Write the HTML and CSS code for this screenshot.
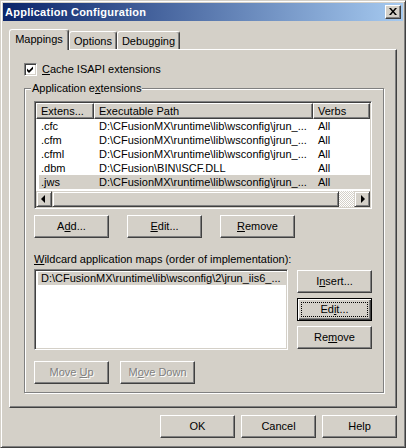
FILE: index.html
```html
<!DOCTYPE html>
<html lang="en">
<head>
    <meta charset="UTF-8">
    <title>Application Configuration</title>
    <link rel="stylesheet" href="styles.css">
</head>
<body>
    <div class="window">
        <div class="titlebar">
            <span class="title">Application Configuration</span>
            <button class="close-btn" title="Close">
                <svg width="16" height="14" viewBox="0 0 16 14"><path d="M4 3h2l2 2.5 2-2.5h2l-3 3.5 3 3.5h-2l-2-2.5-2 2.5H4l3-3.5z" fill="#000"/></svg>
            </button>
        </div>

        <div class="dialog">
            <div class="tabs">
                <div class="tab tab-mappings active">Mappings</div>
                <div class="tab tab-options">Options</div>
                <div class="tab tab-debugging">Debugging</div>
            </div>

            <div class="tab-panel">
                <label class="checkbox-row">
                    <span class="checkbox">
                        <svg width="9" height="9" viewBox="0 0 9 9"><path d="M1 3.5l2 2 4-4v2.5l-4 4-2-2z" fill="#000"/></svg>
                    </span>
                    <span><u>C</u>ache ISAPI extensions</span>
                </label>

                <div class="group">
                    <span class="group-label">Application e<u>x</u>tensions</span>

                    <div class="listview">
                        <div class="lv-header">
                            <div class="lv-head col-ext">Extens...</div>
                            <div class="lv-head col-path">Executable Path</div>
                            <div class="lv-head col-verbs">Verbs</div>
                        </div>
                        <div class="lv-rows">
                            <div class="lv-row">
                                <span class="lv-cell col-ext">.cfc</span>
                                <span class="lv-cell col-path">D:\CFusionMX\runtime\lib\wsconfig\jrun_...</span>
                                <span class="lv-cell col-verbs">All</span>
                            </div>
                            <div class="lv-row">
                                <span class="lv-cell col-ext">.cfm</span>
                                <span class="lv-cell col-path">D:\CFusionMX\runtime\lib\wsconfig\jrun_...</span>
                                <span class="lv-cell col-verbs">All</span>
                            </div>
                            <div class="lv-row">
                                <span class="lv-cell col-ext">.cfml</span>
                                <span class="lv-cell col-path">D:\CFusionMX\runtime\lib\wsconfig\jrun_...</span>
                                <span class="lv-cell col-verbs">All</span>
                            </div>
                            <div class="lv-row">
                                <span class="lv-cell col-ext">.dbm</span>
                                <span class="lv-cell col-path">D:\CFusion\BIN\ISCF.DLL</span>
                                <span class="lv-cell col-verbs">All</span>
                            </div>
                            <div class="lv-row selected">
                                <span class="lv-cell col-ext">.jws</span>
                                <span class="lv-cell col-path">D:\CFusionMX\runtime\lib\wsconfig\jrun_...</span>
                                <span class="lv-cell col-verbs">All</span>
                            </div>
                        </div>
                        <div class="hscroll">
                            <div class="sb-btn">
                                <svg width="14" height="14" viewBox="0 0 14 14"><path d="M4 7l4-4v8z" fill="#000"/></svg>
                            </div>
                            <div class="sb-thumb"></div>
                            <div class="sb-track"></div>
                            <div class="sb-btn">
                                <svg width="14" height="14" viewBox="0 0 14 14"><path d="M6 3l4 4-4 4z" fill="#000"/></svg>
                            </div>
                        </div>
                    </div>

                    <div class="btn-row">
                        <button class="btn">A<u>d</u>d...</button>
                        <button class="btn"><u>E</u>dit...</button>
                        <button class="btn"><u>R</u>emove</button>
                    </div>

                    <div class="wild-label"><u>W</u>ildcard application maps (order of implementation):</div>

                    <div class="wild-area">
                        <div class="listbox">
                            <div class="lb-item selected">D:\CFusionMX\runtime\lib\wsconfig\2\jrun_iis6_...</div>
                        </div>
                        <div class="side-btns">
                            <button class="btn">I<u>n</u>sert...</button>
                            <button class="btn default"><span class="focus">Ed<u>i</u>t...</span></button>
                            <button class="btn">Re<u>m</u>ove</button>
                        </div>
                    </div>

                    <div class="btn-row move-row">
                        <button class="btn" disabled>Move <u>U</u>p</button>
                        <button class="btn" disabled>M<u>o</u>ve Down</button>
                    </div>
                </div>
            </div>

            <div class="footer">
                <button class="btn">OK</button>
                <button class="btn">Cancel</button>
                <button class="btn">Help</button>
            </div>
        </div>
    </div>
</body>
</html>
```

FILE: styles.css
```css
:root {
    --face: #d4d0c8;
    --shadow: #808080;
    --dark: #404040;
    --light: #ffffff;
}

* {
    box-sizing: border-box;
}

body {
    margin: 0;
    background: var(--face);
    font: 11px/13px "Liberation Sans", Arial, sans-serif;
    color: #000;
}

u {
    text-underline-offset: 1px;
}

.window {
    width: 406px;
    height: 448px;
    padding: 2px;
    background: var(--face);
    border: 1px solid;
    border-color: var(--face) var(--dark) var(--dark) var(--face);
    box-shadow: inset 1px 1px var(--light), inset -1px -1px var(--shadow);
}

/* title bar */
.titlebar {
    height: 18px;
    display: flex;
    align-items: center;
    justify-content: space-between;
    padding-left: 2px;
    padding-right: 2px;
    background: linear-gradient(to right, #0a246a, #a6caf0);
}

.title {
    color: #fff;
    font-weight: bold;
    line-height: 18px;
    letter-spacing: 0.25px;
}

.close-btn {
    width: 16px;
    height: 14px;
    padding: 0;
    display: block;
    background: var(--face);
    border: 1px solid;
    border-color: var(--light) var(--dark) var(--dark) var(--light);
    box-shadow: inset -1px -1px var(--shadow);
}

.close-btn svg {
    display: block;
    margin: -1px 0 0 -1px;
}

.dialog {
    padding: 8px 6px 0;
}

/* tabs */
.tabs {
    display: flex;
    align-items: flex-end;
    height: 20px;
}

.tab {
    height: 18px;
    padding-top: 3px;
    text-align: center;
    background: var(--face);
    border: 1px solid;
    border-bottom: 0;
    border-color: var(--light) var(--dark) transparent var(--light);
    border-radius: 3px 3px 0 0;
    box-shadow: inset -1px 0 var(--shadow);
}

.tab.active {
    position: relative;
    height: 21px;
    margin-bottom: -1px;
}

.tab-mappings { width: 60px; }
.tab-options { width: 48px; }
.tab-debugging { width: 63px; }

.tab-panel {
    padding: 13px 12px 14px 14px;
    border: 1px solid;
    border-color: var(--light) var(--dark) var(--dark) var(--light);
    box-shadow: inset -1px -1px var(--shadow);
}

/* checkbox */
.checkbox-row {
    display: flex;
    align-items: flex-start;
    gap: 5px;
    height: 13px;
}

.checkbox {
    width: 13px;
    height: 13px;
    padding: 1px;
    background: #fff;
    border: 1px solid;
    border-color: var(--shadow) var(--light) var(--light) var(--shadow);
    box-shadow: inset 1px 1px var(--dark), inset -1px -1px var(--face);
}

.checkbox svg {
    display: block;
}

/* group box */
.group {
    position: relative;
    margin-top: 12px;
    width: 360px;
    padding: 12px 11px 8px 9px;
    border: 1px solid var(--shadow);
    box-shadow: 1px 1px 0 var(--light), inset 1px 1px 0 var(--light);
}

.group-label {
    position: absolute;
    top: -7px;
    left: 6px;
    padding: 0 1px;
    background: var(--face);
}

/* list view */
.listview,
.listbox {
    padding: 1px;
    background: #fff;
    border: 1px solid;
    border-color: var(--shadow) var(--light) var(--light) var(--shadow);
    box-shadow: inset 1px 1px var(--dark), inset -1px -1px var(--face);
}

.listview {
    width: 338px;
    height: 108px;
    display: flex;
    flex-direction: column;
}

.lv-header,
.lv-row {
    display: flex;
}

.col-ext { width: 58px; }
.col-path { width: 219px; }
.col-verbs { flex: 1; }

.lv-head {
    height: 16px;
    padding: 1px 4px;
    background: var(--face);
    border: 1px solid;
    border-color: var(--light) var(--dark) var(--dark) var(--light);
    box-shadow: inset -1px -1px var(--shadow);
    white-space: nowrap;
    overflow: hidden;
}

.lv-rows {
    height: 72px;
}

.lv-row {
    height: 14px;
    line-height: 14px;
}

.lv-row.selected {
    background: linear-gradient(to right, transparent 3px, var(--face) 3px);
}

.lv-cell {
    padding-left: 5px;
    white-space: nowrap;
    overflow: hidden;
}

.hscroll {
    display: flex;
    height: 16px;
}

.sb-btn,
.sb-thumb {
    height: 16px;
    background: var(--face);
    border: 1px solid;
    border-color: var(--face) var(--dark) var(--dark) var(--face);
    box-shadow: inset 1px 1px var(--light), inset -1px -1px var(--shadow);
}

.sb-btn {
    width: 16px;
}

.sb-btn svg {
    display: block;
}

.sb-thumb {
    flex: 1;
}

.sb-track {
    width: 15px;
    background: repeating-conic-gradient(#fff 0 25%, var(--face) 0 50%) 0 0 / 2px 2px;
}

/* buttons */
.btn-row {
    display: flex;
    gap: 18px;
    margin-top: 6px;
}

.btn {
    width: 75px;
    height: 23px;
    padding: 0;
    font: inherit;
    color: #000;
    background: var(--face);
    border: 1px solid;
    border-color: var(--light) var(--dark) var(--dark) var(--light);
    box-shadow: inset -1px -1px var(--shadow);
}

.btn.default {
    border-color: #000;
    box-shadow: inset 1px 1px var(--light), inset -1px -1px var(--dark), inset -2px -2px var(--shadow);
    padding: 3px;
}

.btn .focus {
    display: block;
    height: 15px;
    line-height: 13px;
    border: 1px dotted #000;
}

.btn:disabled {
    color: var(--shadow);
    text-shadow: 1px 1px 0 var(--light);
}

.wild-label {
    margin-top: 15px;
}

.wild-area {
    display: flex;
    gap: 9px;
    margin-top: 3px;
}

.listbox {
    width: 254px;
    height: 81px;
    padding: 2px 1px;
}

.lb-item {
    height: 13px;
    padding-left: 5px;
    white-space: nowrap;
    overflow: hidden;
}

.lb-item.selected {
    margin-left: 2px;
    padding-left: 3px;
    background: var(--face);
}

.side-btns {
    display: flex;
    flex-direction: column;
    gap: 5px;
    margin-top: 1px;
}

.move-row {
    gap: 11px;
    margin-top: 11px;
}

.footer {
    display: flex;
    justify-content: flex-end;
    gap: 6px;
    margin-top: 7px;
}
```
